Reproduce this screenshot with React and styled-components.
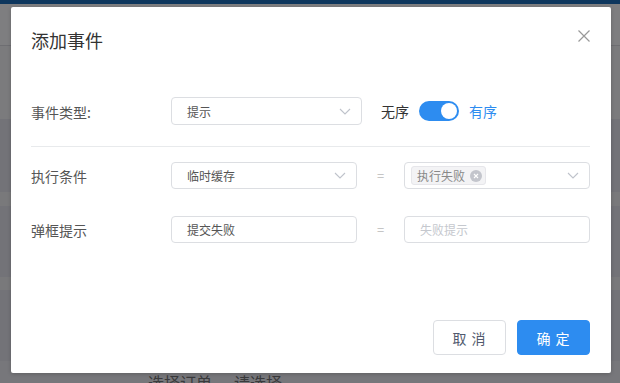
import React from 'react'
import styled, { createGlobalStyle } from 'styled-components'

const Global = createGlobalStyle`
  html, body { margin: 0; padding: 0; }
  body {
    width: 620px;
    height: 383px;
    overflow: hidden;
    font-family: "Noto Sans CJK SC", "Noto Sans", sans-serif;
  }
`

const Page = styled.div`
  position: relative;
  width: 620px;
  height: 383px;
  background: #77777b;
  display: flex;
  flex-direction: column;
  overflow: hidden;
`

const TopBar = styled.div`
  height: 4px;
  background: #0d365d;
`

const Band = styled.div`
  height: ${({ h }) => h}px;
  background: ${({ bg }) => bg};
  border-bottom: 1px solid ${({ line }) => line || 'transparent'};
`

const BehindText = styled.div`
  display: flex;
  gap: 22px;
  padding-left: 148px;
  margin-top: auto;
  height: 12px;
  font-size: 16px;
  line-height: 22px;
  color: #3a3a3c;
  overflow: hidden;
`

const Modal = styled.div`
  position: absolute;
  left: 11px;
  top: 7px;
  width: 600px;
  height: 366px;
  box-sizing: border-box;
  background: #fff;
  border-radius: 2px;
  box-shadow: 0 1px 4px rgba(0, 0, 0, 0.2);
  padding: 0 21px 18px 20px;
  display: flex;
  flex-direction: column;
`

const Header = styled.div`
  display: flex;
  align-items: center;
  justify-content: space-between;
  padding-top: 21px;
  height: 24px;
`

const Title = styled.h2`
  margin: 0;
  font-size: 18px;
  font-weight: 400;
  line-height: 24px;
  color: #333;
`

const Close = styled.button`
  border: 0;
  background: none;
  padding: 0;
  margin-right: -1px;
  margin-top: -8px;
  width: 14px;
  height: 14px;
  display: flex;
  cursor: pointer;
`

const Body = styled.div`
  display: flex;
  flex-direction: column;
  padding-top: 45px;
`

const Row = styled.div`
  display: flex;
  align-items: center;
  margin-top: ${({ mt }) => mt || 0}px;
`

const Label = styled.div`
  width: 140px;
  font-size: 14px;
  color: #555;
  padding-top: 1px;
`

const Field = styled.div`
  box-sizing: border-box;
  width: ${({ w }) => w}px;
  height: ${({ h }) => h || 27}px;
  border: 1px solid #dcdee2;
  border-radius: 4px;
  display: flex;
  align-items: center;
  padding: 0 10px 0 ${({ pl }) => pl || 15}px;
  font-size: 12px;
  color: ${({ placeholder }) => (placeholder ? '#c5c8ce' : '#555')};
`

const Value = styled.span`
  flex: 1;
`

const Equal = styled.div`
  width: 47px;
  text-align: center;
  font-size: 13px;
  color: #bbb;
`

const Divider = styled.div`
  height: 1px;
  background: #e8eaec;
  margin-top: 21px;
`

const SwitchGroup = styled.div`
  display: flex;
  align-items: center;
  margin-left: 19px;
  font-size: 14px;
`

const SwitchText = styled.span`
  color: ${({ on }) => (on ? '#2d8cf0' : '#333')};
`

const Track = styled.div`
  position: relative;
  width: 40px;
  height: 20px;
  border-radius: 10px;
  background: #2d8cf0;
  margin: 0 10px;
`

const Knob = styled.div`
  position: absolute;
  right: 2px;
  top: 2px;
  width: 16px;
  height: 16px;
  border-radius: 50%;
  background: #fff;
`

const Tag = styled.div`
  display: flex;
  align-items: center;
  gap: 5px;
  height: 19px;
  box-sizing: border-box;
  padding: 0 3px 0 5px;
  background: #f3f3f5;
  border: 1px solid #e6e6ea;
  border-radius: 3px;
  font-size: 12px;
  color: #888;
`

const TagClose = styled.span`
  width: 12px;
  height: 12px;
  border-radius: 50%;
  background: #c3c5cc;
  display: flex;
  align-items: center;
  justify-content: center;
`

const Footer = styled.div`
  margin-top: auto;
  display: flex;
  justify-content: flex-end;
  gap: 11px;
`

const Button = styled.button`
  width: 73px;
  height: 35px;
  border-radius: 4px;
  font-family: inherit;
  font-size: 14px;
  letter-spacing: 1px;
  cursor: pointer;
  border: 1px solid ${({ primary }) => (primary ? '#2d8cf0' : '#dcdee2')};
  background: ${({ primary }) => (primary ? '#2d8cf0' : '#fff')};
  color: ${({ primary }) => (primary ? '#fff' : '#515a6e')};
`

const Chevron = () => (
  <svg width="12" height="7" viewBox="0 0 12 7">
    <path d="M1 1l5 5 5-5" fill="none" stroke="#bfc3cb" strokeWidth="1.1" />
  </svg>
)

const CloseIcon = () => (
  <svg width="14" height="14" viewBox="0 0 14 14">
    <path d="M1.5 1.5l11 11M12.5 1.5l-11 11" stroke="#999" strokeWidth="1.2" />
  </svg>
)

const App = () => {
  return (
    <Page>
      <Global />
      <TopBar />
      <Band h={41} bg="#7e7e80" line="#6e6e72" />
      <Band h={72} bg="#7b7b7d" />
      <Band h={72} bg="#737378" />
      <Band h={13} bg="#79797b" />
      <Band h={70} bg="#737378" />
      <Band h={12} bg="#79797b" />
      <Band h={70} bg="#737378" />
      <BehindText>
        <span>选择订单</span>
        <span>请选择</span>
      </BehindText>

      <Modal>
        <Header>
          <Title>添加事件</Title>
          <Close aria-label="关闭">
            <CloseIcon />
          </Close>
        </Header>
        <Body>
          <Row>
            <Label>事件类型:</Label>
            <Field w={191} h={28}>
              <Value>提示</Value>
              <Chevron />
            </Field>
            <SwitchGroup>
              <SwitchText>无序</SwitchText>
              <Track>
                <Knob />
              </Track>
              <SwitchText on>有序</SwitchText>
            </SwitchGroup>
          </Row>
          <Divider />
          <Row mt={15}>
            <Label>执行条件</Label>
            <Field w={186}>
              <Value>临时缓存</Value>
              <Chevron />
            </Field>
            <Equal>=</Equal>
            <Field w={186} pl={6}>
              <Value>
                <Tag style={{ width: 'fit-content' }}>
                  执行失败
                  <TagClose>
                    <svg width="6" height="6" viewBox="0 0 6 6">
                      <path d="M1 1l4 4M5 1l-4 4" stroke="#fff" strokeWidth="1.1" />
                    </svg>
                  </TagClose>
                </Tag>
              </Value>
              <Chevron />
            </Field>
          </Row>
          <Row mt={27}>
            <Label>弹框提示</Label>
            <Field w={186}>
              <Value>提交失败</Value>
            </Field>
            <Equal>=</Equal>
            <Field w={186} placeholder>
              <Value>失败提示</Value>
            </Field>
          </Row>
        </Body>
        <Footer>
          <Button>取 消</Button>
          <Button primary>确 定</Button>
        </Footer>
      </Modal>
    </Page>
  )
}

export default App
